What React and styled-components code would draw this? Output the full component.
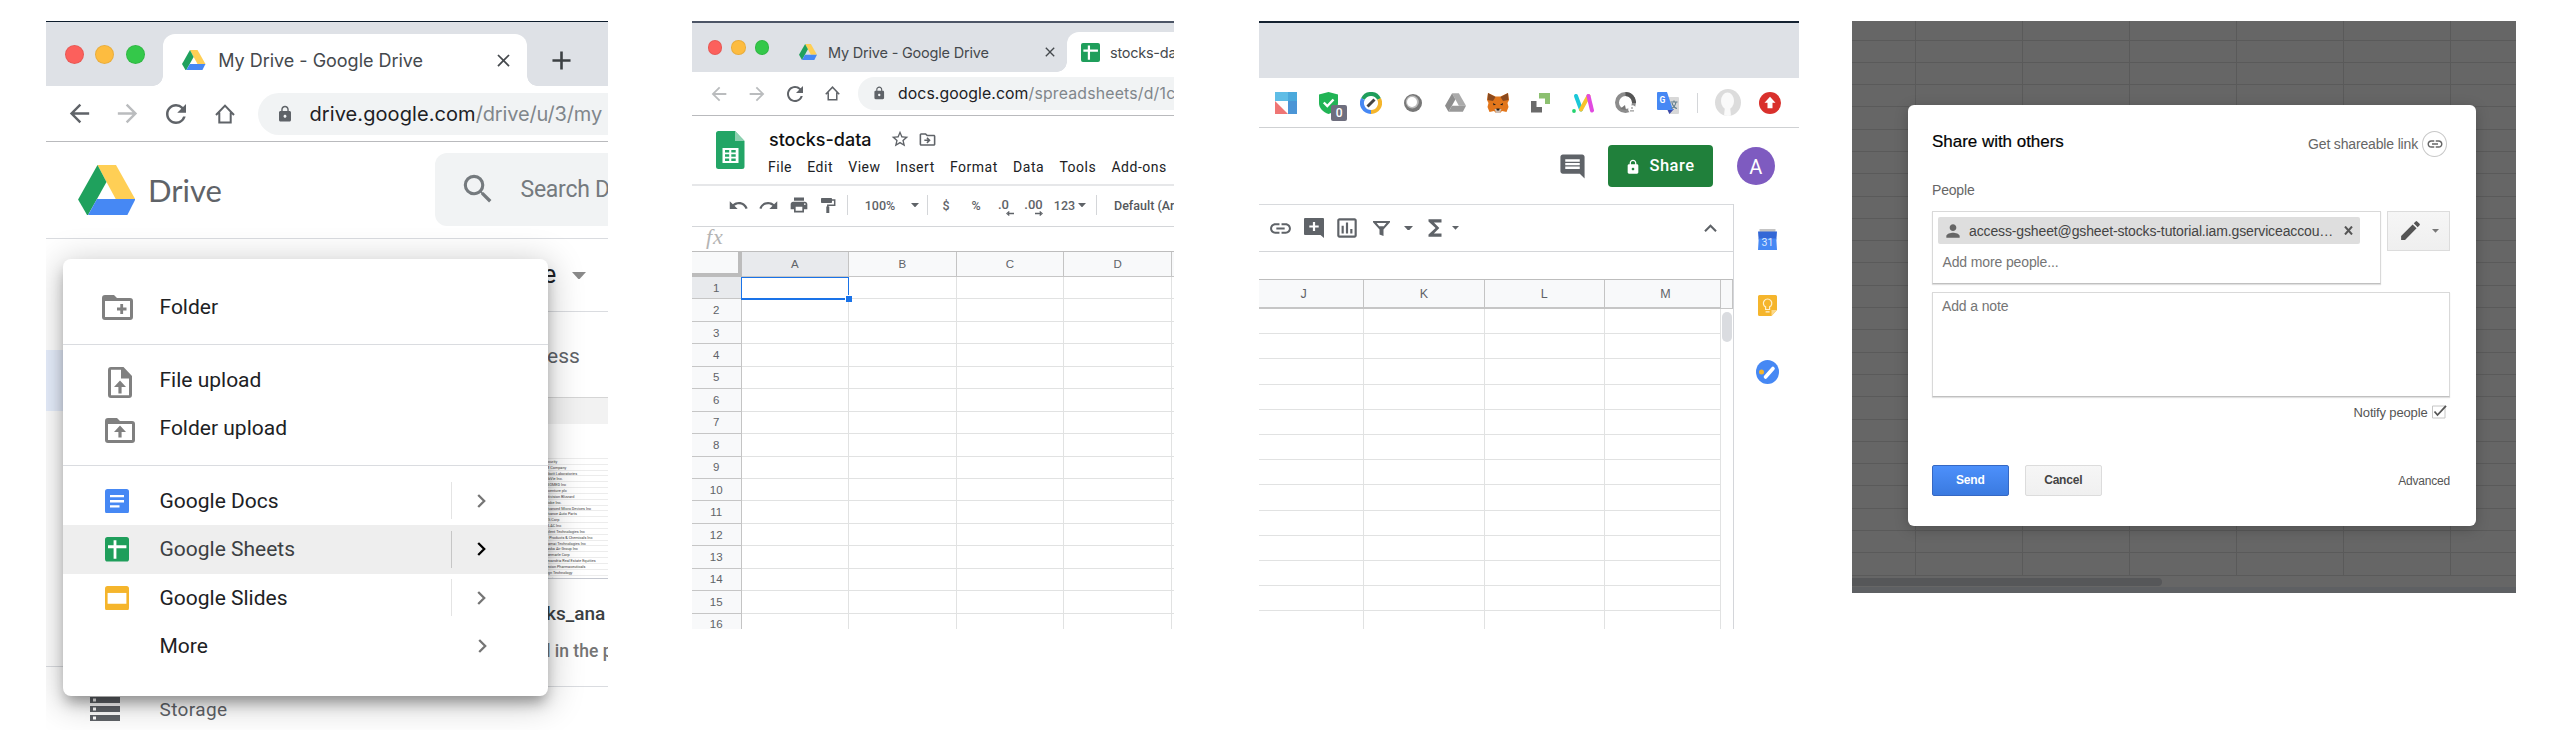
import React from 'react';
import styled, { createGlobalStyle } from 'styled-components';
import {
  MdOutlineDriveFileMove, MdStorage, MdStarBorder, MdPerson, MdEdit, MdLock, MdSearch,
  MdArrowBack, MdArrowForward, MdRefresh, MdKeyboardArrowUp, MdComment, MdFunctions, MdClose,
  MdUndo, MdRedo, MdPrint, MdInsertLink, MdOutlineInsertChart, MdAdd,
} from 'react-icons/md';

const ui = 'Roboto, "Liberation Sans", sans-serif';
const system = 'Inter, Roboto, sans-serif';
const classic = '"Liberation Sans", Arial, sans-serif';

const GlobalStyle = createGlobalStyle`
  * { box-sizing: border-box; }
  body { margin: 0; background: #fff; font-family: ${ui}; }
  svg { display: block; flex: none; }
`;

/* ---------- shared parts ---------- */

const Board = styled.main`
  display: flex;
  align-items: flex-start;
  width: 2560px;
  height: 744px;
  padding: 21px 0 0 46px;
  overflow: hidden;
`;

const Shot = styled.section`
  position: relative;
  flex: none;
  width: ${p => p.$w}px;
  height: ${p => p.$h}px;
  margin-left: ${p => p.$gap || 0}px;
  overflow: hidden;
  background: #fff;
`;

const TabStrip = styled.div`
  display: flex;
  height: ${p => p.$h}px;
  background: #dee1e6;
  border-top: ${p => p.$edge};
`;

const Lights = styled.div`
  display: flex;
  align-items: center;
  gap: ${p => p.$gap}px;
  padding-left: ${p => p.$pad}px;
`;

const Light = styled.i`
  width: ${p => p.$d}px;
  height: ${p => p.$d}px;
  border-radius: 50%;
  background: ${p => p.$c};
  border: 1px solid rgba(0, 0, 0, 0.08);
`;

const Tab = styled.div`
  position: relative;
  display: flex;
  align-items: center;
  align-self: flex-end;
  flex: none;
  width: ${p => p.$w}px;
  height: ${p => p.$h}px;
  margin-left: ${p => p.$ml || 0}px;
  padding: 0 ${p => p.$pr}px 0 ${p => p.$pl}px;
  border-radius: 12px 12px 0 0;
  background: ${p => (p.$active ? '#fff' : 'transparent')};
  color: #45494d;
  font: 400 ${p => p.$fs}px ${system};
  letter-spacing: ${p => p.$ls}px;
  white-space: nowrap;
  &::before, &::after {
    content: '';
    display: ${p => (p.$active ? 'block' : 'none')};
    position: absolute;
    bottom: 0;
    width: 10px;
    height: 10px;
  }
  &::before { left: -10px; background: radial-gradient(circle at 0 0, transparent 9.5px, #fff 10px); }
  &::after { right: -10px; background: radial-gradient(circle at 100% 0, transparent 9.5px, #fff 10px); }
`;

const TabTitle = styled.span`
  flex: 1;
  margin-left: ${p => p.$ml}px;
`;

const NewTab = styled.div`
  display: flex;
  align-items: center;
  margin: 12px 0 0 19px;
  color: #3c4043;
`;

const NavBar = styled.div`
  display: flex;
  align-items: center;
  height: ${p => p.$h}px;
  padding-left: ${p => p.$pl}px;
  border-bottom: 1px solid #b9babd;
`;

const Slot = styled.span`
  display: flex;
  align-items: center;
  justify-content: center;
  flex: none;
  width: ${p => p.$w}px;
  color: ${p => p.$c || '#5f6368'};
`;

const Omnibox = styled.div`
  display: flex;
  align-items: center;
  flex: 1;
  align-self: center;
  height: ${p => p.$h}px;
  margin-left: ${p => p.$ml}px;
  padding-left: ${p => p.$pl}px;
  border-radius: ${p => p.$h / 2}px 0 0 ${p => p.$h / 2}px;
  background: #f1f3f4;
  color: #5f6368;
  overflow: hidden;
`;

const Url = styled.span`
  margin-left: ${p => p.$ml}px;
  font: 400 ${p => p.$fs}px ${system};
  letter-spacing: ${p => p.$ls}px;
  color: #80868b;
  white-space: nowrap;
  b { font-weight: 400; letter-spacing: 0.080px; color: #202124; }
`;

/* ---------- drawings ---------- */

const DriveLogo = ({ w }) => (
  <svg width={w} height={w * 0.885} viewBox="0 0 57.5 51">
    <path fill="#ffcf55" d="M19.5 0h18.5l19.5 34.5H38L28.5 17z" />
    <path fill="#1fa15d" d="M19.5 0l9 17L9.5 51 0 34.5z" />
    <path fill="#4688f4" d="M19 34.2h38.5L49 51H9.5z" />
  </svg>
);

const SheetsTile = ({ w, h }) => (
  <svg width={w} height={h} viewBox="0 0 24 24" preserveAspectRatio="none">
    <rect width="24" height="24" rx="2.5" fill="#1f9e5b" />
    <path d="M10 3.2v18M3 9.6h18.4" stroke="#fff" strokeWidth="2.8" />
  </svg>
);

const DocsTile = () => (
  <svg width="24" height="24.5" viewBox="0 0 24 24" preserveAspectRatio="none">
    <rect width="24" height="24" rx="2.5" fill="#4688f4" />
    <path d="M5 7h14M5 12h14M5 17h9.5" stroke="#fff" strokeWidth="2.4" />
  </svg>
);

const SlidesTile = () => (
  <svg width="24" height="24.5" viewBox="0 0 24 24" preserveAspectRatio="none">
    <rect width="24" height="24" rx="2.5" fill="#f5b52c" />
    <path fill="#fff" d="M2.6 6.8h18.8v10.6H2.6z" />
  </svg>
);

const Home = ({ s }) => (
  <svg width={s} height={s} viewBox="0 0 20 20" fill="none" stroke="currentColor" strokeWidth="2">
    <path d="M1 11L10 1.6 19 11M4.3 8.5V18.4h11.4V8.5" />
  </svg>
);

const FileUp = () => (
  <svg width="24" height="31" viewBox="0 0 24 31">
    <path fill="#808080" fillRule="evenodd" d="M3 0h12.5L24 9v19a3 3 0 0 1-3 3H3a3 3 0 0 1-3-3V3a3 3 0 0 1 3-3zm0 2.8V28.2h18V11.4h-8V2.8z" />
    <path fill="#808080" d="M12 13.5l6 6.5h-4.4v6.5h-3.2V20H6z" />
  </svg>
);

const FolderUp = () => (
  <svg width="30" height="25" viewBox="0 0 30 25">
    <path fill="#808080" fillRule="evenodd" d="M3 0h9l3 3h12a3 3 0 0 1 3 3v16a3 3 0 0 1-3 3H3a3 3 0 0 1-3-3V3a3 3 0 0 1 3-3zm0 6v16h24V6z" />
    <path fill="#808080" d="M15 7.5l6 6.5h-4.4v5.5h-3.2V14H9z" />
  </svg>
);

const FolderPlus = () => (
  <svg width="31" height="25" viewBox="0 0 31 25">
    <path fill="#808080" fillRule="evenodd" d="M3 0h9l3 3h13a3 3 0 0 1 3 3v16a3 3 0 0 1-3 3H3a3 3 0 0 1-3-3V3a3 3 0 0 1 3-3zm0 6v16h25V6z" />
    <path d="M19.7 9v10M15 14h9.5" stroke="#808080" strokeWidth="2.8" />
  </svg>
);

const SheetsFile = () => (
  <svg width="28.5" height="38" viewBox="0 0 28.5 38">
    <path fill="#23a566" d="M2.5 0H19l9.5 10v25.5A2.5 2.5 0 0 1 26 38H2.5A2.5 2.5 0 0 1 0 35.500V2.500A2.500 2.500 0 0 1 2.500 0z" />
    <path fill="#8ed1b1" d="M19 0l9.500 10H19z" />
    <path fill="#fff" fillRule="evenodd" d="M6.500 17h16v15h-16zM9 19v2.500h4.200V19zm6.300 0v2.500h4.400V19zM9 23.300v2.400h4.200v-2.400zm6.300 0v2.400h4.400v-2.400zM9 27.500V30h4.200v-2.500zm6.300 0V30h4.400v-2.500z" />
  </svg>
);

const Roller = () => (
  <svg width="14.500" height="15" viewBox="0 0 14.500 15">
    <path fill="#5f6368" d="M.8 0h9.400a.8.800 0 0 1 .8.800v3.400a.8.800 0 0 1-.8.800H.8A.8.800 0 0 1 0 4.200V.8A.8.800 0 0 1 .8 0z" />
    <path d="M11 2h2.700v5.300H6.800V9" fill="none" stroke="#5f6368" strokeWidth="1.500" />
    <path fill="#5f6368" d="M5.300 8.500h3V15h-3z" />
  </svg>
);

const Caret = ({ w = 8, c = '#5f6368' }) => (
  <svg width={w} height={w * 0.55} viewBox="0 0 10 5.500"><path fill={c} d="M0 0h10L5 5.500z" /></svg>
);

const CommentPlus = () => (
  <svg width="20" height="20" viewBox="0 0 20 20">
    <path fill="#5f6368" d="M1 0h18a1 1 0 0 1 1 1v19l-3.500-3H1a1 1 0 0 1-1-1V1a1 1 0 0 1 1-1z" />
    <path d="M10 4v9M5.300 8.500h9.400" stroke="#fff" strokeWidth="2.200" />
  </svg>
);

const Funnel = () => (
  <svg width="17" height="15" viewBox="0 0 17 15">
    <path fill="#5f6368" fillRule="evenodd" d="M0 0h17v1.200L10.500 8.500V15l-4-1.500V8.500L0 1.200zM3.600 2.100l2.600 3.100h4.600l2.600-3.100z" />
  </svg>
);

const Chevron = () => (
  <svg width="9" height="14" viewBox="0 0 9 14" fill="none" stroke="currentColor" strokeWidth="2.300"><path d="M1.200 1l6 6-6 6" /></svg>
);

const Calendar = () => (
  <svg width="19" height="21" viewBox="0 0 19 21">
    <path fill="#c4c4c4" d="M1.500 0h16v3h-16z" />
    <path fill="#3367d6" d="M0 2.500h19l-.6 8H.6z" />
    <path fill="#4688f4" d="M.7 9.500h17.600L19 21H0z" />
    <text x="9.500" y="16.500" textAnchor="middle" fontFamily="Roboto" fontSize="10.500" fill="#dfe9fd">31</text>
  </svg>
);

const Keep = () => (
  <svg width="19" height="21" viewBox="0 0 19 21">
    <path fill="#f5b52c" d="M1.500 0h16A1.500 1.500 0 0 1 19 1.500V15l-5.500 6h-12A1.500 1.500 0 0 1 0 19.500v-18A1.500 1.500 0 0 1 1.500 0z" />
    <path fill="#fbd98b" d="M13.500 21v-6H19z" />
    <path d="M7.600 14.500v-2.600a4.200 4.200 0 1 1 4 0v2.600zM7.600 16.800h4" fill="none" stroke="#fff1cf" strokeWidth="1.200" />
  </svg>
);

const Tasks = () => (
  <svg width="23" height="24" viewBox="0 0 23 24">
    <ellipse cx="11.500" cy="12" rx="11.500" ry="12" fill="#4688f4" />
    <circle cx="5.500" cy="12" r="2.500" fill="#f5b52c" />
    <path d="M9.500 17L17 8.500" stroke="#fff" strokeWidth="3.600" strokeLinecap="round" />
  </svg>
);

const extensions = [
  <svg width="22" height="22" viewBox="0 0 22 22" key="a">
    <path fill="#5fbde6" d="M0 0h22v9H0z" /><path fill="#4b95d6" d="M13 8h9v14h-9z" />
    <path fill="#4aa9dc" d="M13 0h9v9h-9z" /><path fill="#ef7574" d="M0 9l13 13H0z" />
  </svg>,
  <svg width="19" height="22" viewBox="0 0 19 22" key="b">
    <path fill="#21b455" d="M9.500 0L19 2.500V11c0 5.500-4 9-9.500 11C4 20 0 16.500 0 11V2.500z" />
    <path d="M4.800 10.500L8.300 14 14.500 7.500" fill="none" stroke="#fff" strokeWidth="2.400" />
  </svg>,
  <svg width="22" height="22" viewBox="0 0 22 22" fill="none" strokeWidth="4" key="c">
    <path stroke="#1f9e5b" d="M2.900 7A9 9 0 0 1 19.100 7" /><path stroke="#f5b52c" d="M19.100 7A9 9 0 0 1 11 20" />
    <path stroke="#4688f4" d="M11 20A9 9 0 0 1 2.900 7" /><path stroke="#444" strokeWidth="3" d="M7.500 14.500l7-7" />
  </svg>,
  <svg width="18" height="18" viewBox="0 0 18 18" key="d">
    <circle cx="9" cy="9" r="9" fill="#777" /><circle cx="8.300" cy="8" r="6.500" fill="#b9b9b9" /><circle cx="8" cy="8" r="5" fill="#fff" />
  </svg>,
  <svg width="21" height="19" viewBox="0 0 57.500 51" key="e">
    <path fill="#aaa" d="M19.500 0h18.500l19.500 34.500H38L28.500 17z" /><path fill="#8d8d8d" d="M19.500 0l9 17L9.500 51 0 34.500z" /><path fill="#999" d="M19 34.200h38.500L49 51H9.500z" />
  </svg>,
  <svg width="22" height="20" viewBox="0 0 22 20" key="f">
    <path fill="#e2761b" d="M1 0l7.500 3.500h5L21 0l1 7-1.500 3 1 4-2 5-4.500-1-2 2H9l-2-2-4.500 1-2-5 1-4L0 7z" />
    <path fill="#8a4a1f" d="M1 0l7.500 4L6 8 .5 7zM21 0l-7.500 4L16 8l5.500-1z" />
    <path fill="#cdbdb2" d="M7.500 16h7l-1.500 4H9z" /><path fill="#1d1d1d" d="M6 10l3 1.700-2.500.6zM16 10l-3 1.700 2.500.6zM9.300 15.500h3.400l-.6 2H9.900z" />
  </svg>,
  <svg width="19" height="20" viewBox="0 0 19 20" key="g">
    <path fill="#8cc070" d="M8 0h11v11h-5V5.500H8z" /><path fill="#6a6a6a" d="M0 8h5.500v6H11v5.500H0z" />
  </svg>,
  <svg width="22" height="20" viewBox="0 0 22 20" fill="none" strokeWidth="4" strokeLinecap="round" key="h">
    <path stroke="#1cc8d8" d="M4 3L9 16.500" /><path stroke="#f8c32c" d="M9 16.500L16.500 3" /><path stroke="#e14ae0" d="M16.500 3L20 17.500" />
    <circle cx="2" cy="18" r="1.900" fill="#22d36f" />
  </svg>,
  <svg width="21" height="21" viewBox="0 0 21 21" key="i">
    <circle cx="10.500" cy="10.500" r="8.500" fill="none" stroke="#8c8c8c" strokeWidth="4" /><path d="M10.500 2A8.500 8.500 0 0 1 19 11" fill="none" stroke="#555" strokeWidth="4" />
    <path fill="#777" d="M5 17l5-4 1 5z" /><circle cx="17" cy="17" r="3.800" fill="#fff" /><path d="M15 18.800h4M17 15v2" stroke="#999" strokeWidth="1.300" />
  </svg>,
  <svg width="22" height="22" viewBox="0 0 22 22" key="j">
    <path fill="#d8d8d8" d="M7 5h14a1 1 0 0 1 1 1v15a1 1 0 0 1-1 1H12z" /><path fill="#3949ab" d="M10 17h7l-4.500 5z" />
    <path fill="#4688f4" d="M1 0h9l6 18H1a1 1 0 0 1-1-1V1a1 1 0 0 1 1-1z" />
    <text x="2.500" y="11" fontFamily="Roboto" fontWeight="700" fontSize="8.500" fill="#fff">G</text>
    <path d="M13.500 10h7M17 8.500V10M19 10c-.5 3-2.500 5.500-4.500 6.500M15 11c1 3 3 5 5 5.500" stroke="#607d8b" fill="none" strokeWidth="1.100" />
  </svg>,
];

/* ---------- Drive ---------- */

const DriveHeader = styled.header`
  display: flex;
  align-items: center;
  height: 97px;
  padding-left: 31.5px;
  border-bottom: 1px solid #dadce0;
`;

const Wordmark = styled.span`
  flex: none;
  width: 299.500px;
  padding-left: 13px;
  font: 400 31px Lato, ${ui};
  color: #5f6368;
`;

const SearchBox = styled.div`
  display: flex;
  align-items: center;
  flex: 1;
  height: 73px;
  margin-bottom: 2px;
  padding-left: 24px;
  gap: 24px;
  border-radius: 12px 0 0 12px;
  background: #f1f3f4;
  color: #757a7e;
  font: 400 23px ${ui};
  letter-spacing: -0.25px;
  white-space: nowrap;
  overflow: hidden;
`;

const DriveBody = styled.div`
  display: flex;
  height: 496px;
`;

const Sidebar = styled.nav`
  flex: none;
  width: 480px;
  padding-top: 111px;
`;

const SelectedItem = styled.div`
  height: 61px;
  margin-bottom: 255px;
  background: #e8f0fe;
`;

const StorageRow = styled.div`
  display: flex;
  align-items: center;
  height: 85px;
  padding-left: 41px;
  gap: 36.5px;
  border-top: 1px solid #dadce0;
  color: #5f6368;
  font: 400 19px ${ui};
  letter-spacing: 0.4px;
`;

const Files = styled.div`
  flex: 1;
  margin-left: 20px;
  overflow: hidden;
`;

const Crumb = styled.div`
  display: flex;
  align-items: center;
  height: 73px;
  gap: 16px;
  border-bottom: 1px solid #dadce0;
  font: 400 25px ${ui};
  color: #202124;
  span { margin: -2px 0 0 -3px; }
  svg { margin-top: 1px; }
`;

const QuickLabel = styled.div`
  height: 86px;
  padding: 30px 0 0 1px;
  border-bottom: 1px solid #d5d5d5;
  font: 400 21px/29px ${ui};
  color: #5f6368;
`;

const Band = styled.div`
  height: 26px;
  margin-bottom: 34px;
  background: #f2f2f2;
`;

const Thumb = styled.div`
  height: 121px;
  overflow: hidden;
  border-bottom: 1px solid #c5c8d0;
`;

const ThumbRow = styled.div`
  height: 5.830px;
  border-top: 1px solid #ececec;
  font: 400 3.800px/5px ${ui};
  color: #444;
  white-space: nowrap;
`;

const FileName = styled.div`
  margin-top: 22px;
  font: 500 19px/26px ${ui};
  color: #3c4043;
`;

const FileNote = styled.div`
  height: 60px;
  padding-top: 12px;
  border-bottom: 1px solid #dadce0;
  font: 500 17.500px/24px ${ui};
  color: #757575;
  white-space: nowrap;
`;

const Menu = styled.div`
  position: absolute;
  left: 16.500px;
  top: 238px;
  width: 485.500px;
  height: 437px;
  padding-top: 24px;
  border-radius: 8px;
  background: #fff;
  box-shadow: 0 9px 14px -3px rgba(0, 0, 0, 0.34), 0 6px 34px 3px rgba(0, 0, 0, 0.22);
`;

const MenuItem = styled.div`
  display: flex;
  align-items: center;
  height: 48.500px;
  background: ${p => (p.$on ? '#eee' : 'transparent')};
  color: ${p => (p.$on ? '#3c4043' : '#202124')};
  font: 400 21px ${ui};
`;

const MenuIcon = styled.span`
  display: flex;
  width: 97px;
  padding: ${p => p.$pt || 0}px 0 0 ${p => p.$pl}px;
`;

const MenuLabel = styled.span`
  flex: 1;
`;

const Submenu = styled.span`
  display: flex;
  align-items: center;
  width: 97px;
  height: 37px;
  padding-left: ${p => (p.$bare ? 26 : 25)}px;
  border-left: 1px solid ${p => (p.$bare ? 'transparent' : p.$on ? '#c6c6c6' : '#e4e4e4')};
  color: ${p => (p.$on ? '#000' : '#757575')};
`;

const Divider = styled.hr`
  height: 1px;
  margin: 12px 0 11px;
  border: 0;
  background: #dadce0;
`;

const holdings = [
  'ecurity', 'M Company', 'bbott Laboratories', 'bbVie Inc.', 'BIOMED Inc', 'ccenture plc', 'ctivision Blizzard',
  'dobe Inc.', 'dvanced Micro Devices Inc', 'dvance Auto Parts', 'ES Corp', 'FLAC Inc', 'gilent Technologies Inc',
  'ir Products & Chemicals Inc', 'kamai Technologies Inc', 'laska Air Group Inc', 'lbemarle Corp',
  'lexandria Real Estate Equities', 'lexion Pharmaceuticals', 'lign Technology', 'llegion',
];

const DriveWindow = () => (
  <Shot $w={562} $h={709}>
    <TabStrip $h={65} $edge="1px solid #0d1c2c">
      <Lights $pad={19} $gap={11.4}>
        <Light $d={19} $c="#fc605c" /><Light $d={19} $c="#fdbc40" /><Light $d={19} $c="#34c84a" />
      </Lights>
      <Tab $active $w={363.5} $h={52} $ml={18.5} $pl={19} $pr={13} $fs={18} $ls={-0.02}>
        <DriveLogo w={23.5} />
        <TabTitle $ml={12.5}>My Drive - Google Drive</TabTitle>
        <MdClose size={21} />
      </Tab>
      <NewTab><MdAdd size={31} /></NewTab>
    </TabStrip>
    <NavBar $h={56} $pl={9}>
      <Slot $w={48.5}><MdArrowBack size={29} /></Slot>
      <Slot $w={48.5} $c="#babcbe"><MdArrowForward size={29} /></Slot>
      <Slot $w={48.5}><MdRefresh size={30} /></Slot>
      <Slot $w={48.5}><Home s={20} /></Slot>
      <Omnibox $h={42} $ml={9} $pl={18}>
        <MdLock size={18} />
        <Url $ml={15.5} $fs={20} $ls={-0.15}><b>drive.google.com</b>/drive/u/3/my</Url>
      </Omnibox>
    </NavBar>
    <DriveHeader>
      <DriveLogo w={57.5} />
      <Wordmark>Drive</Wordmark>
      <SearchBox><MdSearch size={38} />Search Drive</SearchBox>
    </DriveHeader>
    <DriveBody>
      <Sidebar>
        <SelectedItem />
        <StorageRow><MdStorage size={36} />Storage</StorageRow>
      </Sidebar>
      <Files>
        <Crumb><span>e</span><Caret w={14} c="#8a8a8a" /></Crumb>
        <QuickLabel>ess</QuickLabel>
        <Band />
        <Thumb>{holdings.map(h => <ThumbRow key={h}>{h}</ThumbRow>)}</Thumb>
        <FileName>ks_ana</FileName>
        <FileNote>l in the p</FileNote>
      </Files>
    </DriveBody>
    <Menu>
      <MenuItem><MenuIcon $pl={39.5}><FolderPlus /></MenuIcon><MenuLabel>Folder</MenuLabel></MenuItem>
      <Divider />
      <MenuItem><MenuIcon $pl={45.5} $pt={5}><FileUp /></MenuIcon><MenuLabel>File upload</MenuLabel></MenuItem>
      <MenuItem><MenuIcon $pl={42.5} $pt={5}><FolderUp /></MenuIcon><MenuLabel>Folder upload</MenuLabel></MenuItem>
      <Divider />
      <MenuItem><MenuIcon $pl={42.5}><DocsTile /></MenuIcon><MenuLabel>Google Docs</MenuLabel><Submenu><Chevron /></Submenu></MenuItem>
      <MenuItem $on><MenuIcon $pl={42.5}><SheetsTile w={24} h={24.5} /></MenuIcon><MenuLabel>Google Sheets</MenuLabel><Submenu $on><Chevron /></Submenu></MenuItem>
      <MenuItem><MenuIcon $pl={42.5}><SlidesTile /></MenuIcon><MenuLabel>Google Slides</MenuLabel><Submenu><Chevron /></Submenu></MenuItem>
      <MenuItem><MenuIcon $pl={42.5} /><MenuLabel>More</MenuLabel><Submenu $bare><Chevron /></Submenu></MenuItem>
    </Menu>
  </Shot>
);

/* ---------- Sheets, left side ---------- */

const DocHeader = styled.header`
  display: flex;
  height: 70px;
  padding: 15px 0 0 24px;
  border-bottom: 2px solid #e6e7e9;
`;

const DocInfo = styled.div`
  margin-left: 24.500px;
  margin-top: -1px;
`;

const DocTitle = styled.div`
  display: flex;
  align-items: center;
  height: 18px;
  color: #5f6368;
  strong { width: 121px; font: 500 18px Inter, ${ui}; letter-spacing: -0.020px; color: #111; }
  svg + svg { margin-left: 7.500px; }
`;

const MenuBar = styled.div`
  display: flex;
  gap: 15.300px;
  margin: 10px 0 0 -1px;
  font: 400 14px/18px ${ui};
  letter-spacing: 0.500px;
  color: #202124;
  white-space: nowrap;
`;

const ToolBar = styled.div`
  display: flex;
  align-items: center;
  height: ${p => p.$h}px;
  padding-left: ${p => p.$pl}px;
  padding-bottom: ${p => p.$pb || 0}px;
  border-bottom: 1px solid #d4d6d9;
  font: 500 12.500px ${ui};
  color: #54585c;
  white-space: nowrap;
`;

const Rule = styled.i`
  width: 1px;
  height: 20px;
  background: #d4d6d9;
`;

const Decimal = styled.span`
  display: flex;
  flex-direction: column;
  align-items: flex-end;
  height: 17px;
  margin-top: 5px;
  line-height: 12px;
  font-size: 13px;
`;

const ArrowLeft = styled.svg`
  margin-right: -5px;
`;

const FontName = styled.span`
  margin-left: 9.500px;
`;

const FormulaBar = styled.div`
  height: 25px;
  padding-left: 14px;
  border-bottom: 1px solid #bdbdbd;
  font: italic 400 22px/20px "Liberation Serif", serif;
  letter-spacing: 1px;
  color: #b4b4b4;
`;

const HeadRow = styled.div`
  display: grid;
  grid-template-columns: ${p => p.$cols};
  height: ${p => p.$h}px;
  margin-top: ${p => p.$mt || 0}px;
  border-top: ${p => (p.$mt ? '1px solid #bdbdbd' : 'none')};
`;

const ColHead = styled.div`
  display: flex;
  align-items: center;
  justify-content: center;
  padding-left: ${p => p.$pl || 0}px;
  padding-right: ${p => p.$pr || 0}px;
  background: ${p => (p.$on ? '#e8eaed' : '#f8f9fa')};
  border-right: 1px solid #c4c4c4;
  border-bottom: ${p => p.$line || 1}px solid #c6c6c6;
  font: 400 ${p => p.$fs || 11.5}px ${classic};
  color: #5f6368;
`;

const Corner = styled.div`
  background: #f8f9fa;
  border-right: 4px solid #bcbcbc;
  border-bottom: 4px solid #bcbcbc;
`;

const Cells = styled.div`
  position: relative;
  display: grid;
  grid-template-columns: ${p => p.$cols};
  grid-auto-rows: ${p => p.$row}px;
`;

const Cell = styled.div`
  border-right: 1px solid ${p => p.$line || '#e1e2e2'};
  border-bottom: 1px solid ${p => p.$line || '#e1e2e2'};
`;

const RowHead = styled.div`
  display: flex;
  align-items: center;
  justify-content: center;
  background: ${p => (p.$on ? '#e8eaed' : '#f8f9fa')};
  border-right: 1px solid #c4c4c4;
  border-bottom: 1px solid #c6c6c6;
  font: 400 11.500px ${classic};
  color: #5f6368;
`;

const Selection = styled.div`
  position: absolute;
  left: 48.500px;
  top: 0;
  width: 108px;
  height: 23px;
  border: 1px solid #1a73e8;
  border-bottom-width: 2px;
  &::after {
    content: '';
    position: absolute;
    right: -4px;
    bottom: -4px;
    width: 6px;
    height: 6px;
    background: #1a73e8;
    border: solid #fff;
    border-width: 1px 0 0 1px;
    box-sizing: content-box;
  }
`;

const leftCols = '49.5px repeat(4, 107.6px) 12px';

const SheetsLeft = () => (
  <Shot $w={482} $h={608} $gap={84}>
    <TabStrip $h={51} $edge="2px solid #4c5566">
      <Lights $pad={15.75} $gap={9}>
        <Light $d={14.5} $c="#fc605c" /><Light $d={14.5} $c="#fdbc40" /><Light $d={14.5} $c="#34c84a" />
      </Lights>
      <Tab $w={287} $h={40} $ml={10.75} $pl={19} $pr={9} $fs={14.5} $ls={-0.2}>
        <DriveLogo w={18} />
        <TabTitle $ml={11}>My Drive - Google Drive</TabTitle>
        <MdClose size={16} />
      </Tab>
      <Tab $active $w={240} $h={40} $pl={14} $pr={10} $fs={14.5} $ls={-0.25}>
        <SheetsTile w={19} h={19} />
        <TabTitle $ml={10}>stocks-data</TabTitle>
      </Tab>
    </TabStrip>
    <NavBar $h={44} $pl={7.5}>
      <Slot $w={38} $c="#babcbe"><MdArrowBack size={22} /></Slot>
      <Slot $w={38} $c="#babcbe"><MdArrowForward size={22} /></Slot>
      <Slot $w={38}><MdRefresh size={24} /></Slot>
      <Slot $w={38}><Home s={15} /></Slot>
      <Omnibox $h={32.5} $ml={6.5} $pl={13.5}>
        <MdLock size={14.5} />
        <Url $ml={12} $fs={15.8} $ls={0.2}><b>docs.google.com</b>/spreadsheets/d/1c</Url>
      </Omnibox>
    </NavBar>
    <DocHeader>
      <SheetsFile />
      <DocInfo>
        <DocTitle><strong>stocks-data</strong><MdStarBorder size={20} /><MdOutlineDriveFileMove size={19} /></DocTitle>
        <MenuBar>
          {['File', 'Edit', 'View', 'Insert', 'Format', 'Data', 'Tools', 'Add-ons'].map(m => <span key={m}>{m}</span>)}
        </MenuBar>
      </DocInfo>
    </DocHeader>
    <ToolBar $h={41} $pl={31.5} $pb={2}>
      <Slot $w={30}><MdUndo size={21} /></Slot>
      <Slot $w={30}><MdRedo size={21} /></Slot>
      <Slot $w={30}><MdPrint size={20} /></Slot>
      <Slot $w={30}><Roller /></Slot>
      <Slot $w={8}><Rule /></Slot>
      <Slot $w={57}>100%</Slot>
      <Slot $w={12}><Caret /></Slot>
      <Slot $w={13}><Rule /></Slot>
      <Slot $w={25}>$</Slot>
      <Slot $w={35}>%</Slot>
      <Slot $w={20}>
        <Decimal>
          .0
          <ArrowLeft width="8" height="5" viewBox="0 0 8 5"><path d="M8 2.500H2M3.300.5l-2.400 2 2.400 2" fill="none" stroke="#5f6368" strokeWidth="1.300" /></ArrowLeft>
        </Decimal>
      </Slot>
      <Slot $w={40}>
        <Decimal>
          .00
          <svg width="8" height="5" viewBox="0 0 8 5"><path d="M0 2.500h6M4.700.5l2.400 2-2.400 2" fill="none" stroke="#5f6368" strokeWidth="1.300" /></svg>
        </Decimal>
      </Slot>
      <Slot $w={22}>123</Slot>
      <Slot $w={12}><Caret /></Slot>
      <Slot $w={17}><Rule /></Slot>
      <FontName>Default (Arial)</FontName>
    </ToolBar>
    <FormulaBar>fx</FormulaBar>
    <HeadRow $cols={leftCols} $h={25}>
      <Corner />
      {['A', 'B', 'C', 'D', ''].map((c, i) => <ColHead key={i} $on={i === 0}>{c}</ColHead>)}
    </HeadRow>
    <Cells $cols={leftCols} $row={22.45}>
      {Array.from({ length: 16 }, (_, r) => (
        <React.Fragment key={r}>
          <RowHead $on={r === 0}>{r + 1}</RowHead>
          <Cell /><Cell /><Cell /><Cell /><Cell />
        </React.Fragment>
      ))}
      <Selection />
    </Cells>
  </Shot>
);

/* ---------- Sheets, right side ---------- */

const ExtensionBar = styled.div`
  display: flex;
  align-items: center;
  height: 50px;
  padding-left: 5.250px;
  border-bottom: 1px solid #cfd1d3;
`;

const ExtensionSlot = styled.span`
  position: relative;
  display: flex;
  align-items: center;
  justify-content: center;
  flex: none;
  width: 42.500px;
  height: 24px;
`;

const Count = styled.span`
  position: absolute;
  left: 24.500px;
  top: 14px;
  width: 16px;
  height: 16px;
  border-radius: 2px;
  background: #6e6e7e;
  color: #fff;
  font: 500 12px/17px ${ui};
  text-align: center;
`;

const ProfileRing = styled.span`
  display: flex;
  justify-content: center;
  align-items: flex-end;
  flex: none;
  width: 26px;
  height: 27px;
  margin: 0 18.500px 0 8.500px;
  border-radius: 50%;
  background: #dcdcdc;
  overflow: hidden;
`;

const ShareHeader = styled.div`
  display: flex;
  align-items: center;
  justify-content: flex-end;
  height: 76px;
  padding-right: 24px;
`;

const ShareButton = styled.div`
  display: flex;
  align-items: center;
  justify-content: center;
  gap: 8px;
  width: 105px;
  height: 42px;
  margin: 0 24px 0 21px;
  padding-bottom: 2px;
  border-radius: 4px;
  background: #20803b;
  color: #fff;
  font: 500 16.500px ${ui};
  letter-spacing: 0.500px;
  svg { margin-top: 3px; }
`;

const Initial = styled.span`
  width: 38.500px;
  height: 38.500px;
  border-radius: 50%;
  background: #7e5bc0;
  color: #fff;
  font: 400 20px/40px ${ui};
  text-align: center;
`;

const SplitArea = styled.div`
  display: flex;
  height: 425px;
`;

const SheetArea = styled.div`
  width: 474px;
  border-top: 1px solid #d8dadd;
`;

const SideRail = styled.aside`
  display: flex;
  flex-direction: column;
  align-items: center;
  gap: 44.500px;
  flex: 1;
  padding-top: 25px;
  padding-left: 2px;
  border-left: 1px solid #d4d6da;
`;

const GridRow = styled.div`
  display: flex;
  height: 321px;
  overflow: hidden;
`;

const ScrollTrack = styled.div`
  width: 11px;
  padding: 3px 0 0 1px;
`;

const ScrollThumb = styled.div`
  height: 30px;
  border-radius: 5px;
  background: #dadce0;
`;

const rightCols = '105px 120.6px 120.4px 116px';

const SheetsRight = () => (
  <Shot $w={540} $h={608} $gap={85}>
    <TabStrip $h={57} $edge="2px solid #142231" />
    <ExtensionBar>
      {extensions.map((icon, i) => (
        <ExtensionSlot key={i}>{icon}{i === 1 && <Count>0</Count>}</ExtensionSlot>
      ))}
      <Slot $w={17}><Rule /></Slot>
      <ProfileRing>
        <svg width="15" height="24" viewBox="0 0 15 24"><ellipse cx="7.500" cy="9" rx="6.500" ry="8.500" fill="#fafafa" /><path fill="#fafafa" d="M5 14h5l1 10H4z" /></svg>
      </ProfileRing>
      <svg width="22" height="22" viewBox="0 0 22 22"><circle cx="11" cy="11" r="11" fill="#d9302c" /><path fill="#fff" d="M11 4.800l5.500 6H13.500v5.500h-5v-5.500H5.500z" /></svg>
    </ExtensionBar>
    <ShareHeader>
      <MdComment size={29} color="#5f6368" />
      <ShareButton><MdLock size={16} />Share</ShareButton>
      <Initial>A</Initial>
    </ShareHeader>
    <SplitArea>
      <SheetArea>
        <ToolBar $h={47} $pl={5}>
          <Slot $w={33}><MdInsertLink size={25} /></Slot>
          <Slot $w={34}><CommentPlus /></Slot>
          <Slot $w={32}><MdOutlineInsertChart size={26} /></Slot>
          <Slot $w={36}><Funnel /></Slot>
          <Slot $w={19}><Caret w={9} /></Slot>
          <Slot $w={33}><MdFunctions size={26} /></Slot>
          <Slot $w={8}><Caret w={7} /></Slot>
          <Slot $w={230} />
          <Slot $w={42}><MdKeyboardArrowUp size={25} /></Slot>
        </ToolBar>
        <HeadRow $cols={`${rightCols} 12px`} $h={30} $mt={27}>
          <ColHead $fs={12.5} $line={2} $pr={15}>J</ColHead>
          <ColHead $fs={12.5} $line={2}>K</ColHead>
          <ColHead $fs={12.5} $line={2}>L</ColHead>
          <ColHead $fs={12.5} $line={2} $pl={6}>M</ColHead>
          <ColHead />
        </HeadRow>
        <GridRow>
          <Cells $cols={rightCols} $row={25.2}>
            {Array.from({ length: 52 }, (_, i) => <Cell key={i} />)}
          </Cells>
          <ScrollTrack><ScrollThumb /></ScrollTrack>
        </GridRow>
      </SheetArea>
      <SideRail><Calendar /><Keep /><Tasks /></SideRail>
    </SplitArea>
  </Shot>
);

/* ---------- Share dialog ---------- */

const Backdrop = styled.div`
  height: 572px;
  background: #666;
  border-bottom: 1px solid #c4c4c4;
`;

const DimFirstRow = styled.div`
  height: 19.500px;
  overflow: hidden;
`;

const DimScroll = styled.div`
  height: 11px;
  padding-top: 2px;
  &::before {
    content: '';
    display: block;
    width: 310px;
    height: 8px;
    border-radius: 0 4px 4px 0;
    background: #565759;
  }
`;

const DimFooter = styled.div`
  height: 6px;
  background: #5e6063;
`;

const Dialog = styled.div`
  position: absolute;
  left: 56.500px;
  top: 84px;
  width: 567.500px;
  height: 421px;
  padding: 25.500px 25.500px 0 24px;
  border-radius: 6px;
  background: #fff;
  box-shadow: 0 3px 14px rgba(0, 0, 0, 0.22);
  font-family: ${classic};
`;

const DialogHead = styled.div`
  display: flex;
  align-items: center;
  height: 26px;
  font-size: 14px;
  letter-spacing: -0.160px;
  color: #666;
`;

const DialogTitle = styled.h2`
  flex: 1;
  margin: 0 0 3.500px;
  font: 400 17px ${classic};
  letter-spacing: -0.030px;
  -webkit-text-stroke: 0.200px #111;
  color: #000;
`;

const LinkCircle = styled.span`
  display: flex;
  align-items: center;
  justify-content: center;
  width: 25px;
  height: 26px;
  margin: 0 3px 0 4px;
  border: 1px solid #c8c8c8;
  border-radius: 50%;
`;

const FieldLabel = styled.div`
  margin-top: 25.500px;
  font-size: 14px;
  line-height: 16px;
  letter-spacing: -0.180px;
  color: #666;
`;

const PeopleRow = styled.div`
  display: flex;
  gap: 6.500px;
  margin-top: 13px;
`;

const PeopleField = styled.div`
  width: 448.500px;
  height: 73px;
  padding: 5px 5px 0;
  border: 1px solid #d9d9d9;
  border-bottom-color: #c0c0c0;
  box-shadow: 0 1px 1px rgba(0, 0, 0, 0.12);
`;

const Chip = styled.div`
  display: flex;
  align-items: center;
  width: 422px;
  height: 27px;
  padding: 0 3px 0 5px;
  border-radius: 2px;
  background: #dedede;
  color: #444;
  font-size: 14px;
  letter-spacing: -0.130px;
  white-space: nowrap;
  span { flex: 1; padding-left: 6px; }
`;

const Hint = styled.div`
  padding: ${p => p.$p};
  font-size: 14px;
  line-height: 16px;
  letter-spacing: -0.130px;
  color: #757575;
`;

const RoleButton = styled.div`
  display: flex;
  align-items: center;
  justify-content: center;
  gap: 9px;
  width: 63px;
  height: 39.500px;
  border: 1px solid #dcdcdc;
  background: linear-gradient(#f6f6f6, #efefef);
  color: #555;
`;

const NoteField = styled.div`
  height: 105px;
  margin-top: 8px;
  border: 1px solid #d9d9d9;
  border-bottom-color: #c0c0c0;
  box-shadow: 0 1px 1px rgba(0, 0, 0, 0.12);
`;

const NotifyRow = styled.div`
  display: flex;
  justify-content: flex-end;
  gap: 4.500px;
  height: 16px;
  margin-top: 8px;
  padding-right: 3px;
  font-size: 13px;
  line-height: 16px;
  letter-spacing: -0.150px;
  color: #555;
`;

const Actions = styled.div`
  display: flex;
  align-items: center;
  gap: 16.500px;
  margin-top: 44px;
  font-size: 12px;
  letter-spacing: -0.200px;
  color: #555;
  > :last-child { margin-left: auto; }
`;

const ActionButton = styled.div`
  width: 76.500px;
  height: 31px;
  border: 1px solid ${p => (p.$primary ? '#3568c4' : '#dcdcdc')};
  border-radius: 2px;
  background: ${p => (p.$primary ? 'linear-gradient(#4d90fb, #3a7ae0)' : 'linear-gradient(#f6f6f6, #f0f0f0)')};
  color: ${p => (p.$primary ? '#fff' : '#444')};
  font: 700 12px/29px ${classic};
  text-align: center;
`;

const dimCols = '64.7px repeat(6, 106.9px)';

const ShareShot = () => (
  <Shot $w={664} $h={572} $gap={52.5}>
    <Backdrop>
      <DimFirstRow>
        <Cells $cols={dimCols} $row={19.5}>
          {Array.from({ length: 7 }, (_, i) => <Cell key={i} $line="#5a5a5a" />)}
        </Cells>
      </DimFirstRow>
      <Cells $cols={dimCols} $row={22.3}>
        {Array.from({ length: 168 }, (_, i) => <Cell key={i} $line="#5a5a5a" />)}
      </Cells>
      <DimScroll />
      <DimFooter />
    </Backdrop>
    <Dialog>
      <DialogHead>
        <DialogTitle>Share with others</DialogTitle>
        Get shareable link
        <LinkCircle><MdInsertLink size={18} /></LinkCircle>
      </DialogHead>
      <FieldLabel>People</FieldLabel>
      <PeopleRow>
        <PeopleField>
          <Chip>
            <MdPerson size={20} color="#666" />
            <span>access-gsheet@gsheet-stocks-tutorial.iam.gserviceaccou…</span>
            <svg width="17" height="9" viewBox="0 0 17 9"><path d="M5 .5l7 8M12 .5l-7 8" stroke="#555" strokeWidth="2" /></svg>
          </Chip>
          <Hint $p="10px 0 0 4.5px">Add more people...</Hint>
        </PeopleField>
        <RoleButton><MdEdit size={25} /><Caret w={7} c="#777" /></RoleButton>
      </PeopleRow>
      <NoteField><Hint $p="4.5px 0 0 9px">Add a note</Hint></NoteField>
      <NotifyRow>
        Notify people
        <svg width="15" height="14" viewBox="0 0 15 14">
          <path d="M.5 1h12.500v12H.5z" fill="#fff" stroke="#c6c6c6" /><path d="M2.500 6.500L5.500 10 14 .8" fill="none" stroke="#555" strokeWidth="1.800" />
        </svg>
      </NotifyRow>
      <Actions>
        <ActionButton $primary>Send</ActionButton>
        <ActionButton>Cancel</ActionButton>
        <span>Advanced</span>
      </Actions>
    </Dialog>
  </Shot>
);

export default function App() {
  return (
    <>
      <GlobalStyle />
      <Board>
        <DriveWindow />
        <SheetsLeft />
        <SheetsRight />
        <ShareShot />
      </Board>
    </>
  );
}
